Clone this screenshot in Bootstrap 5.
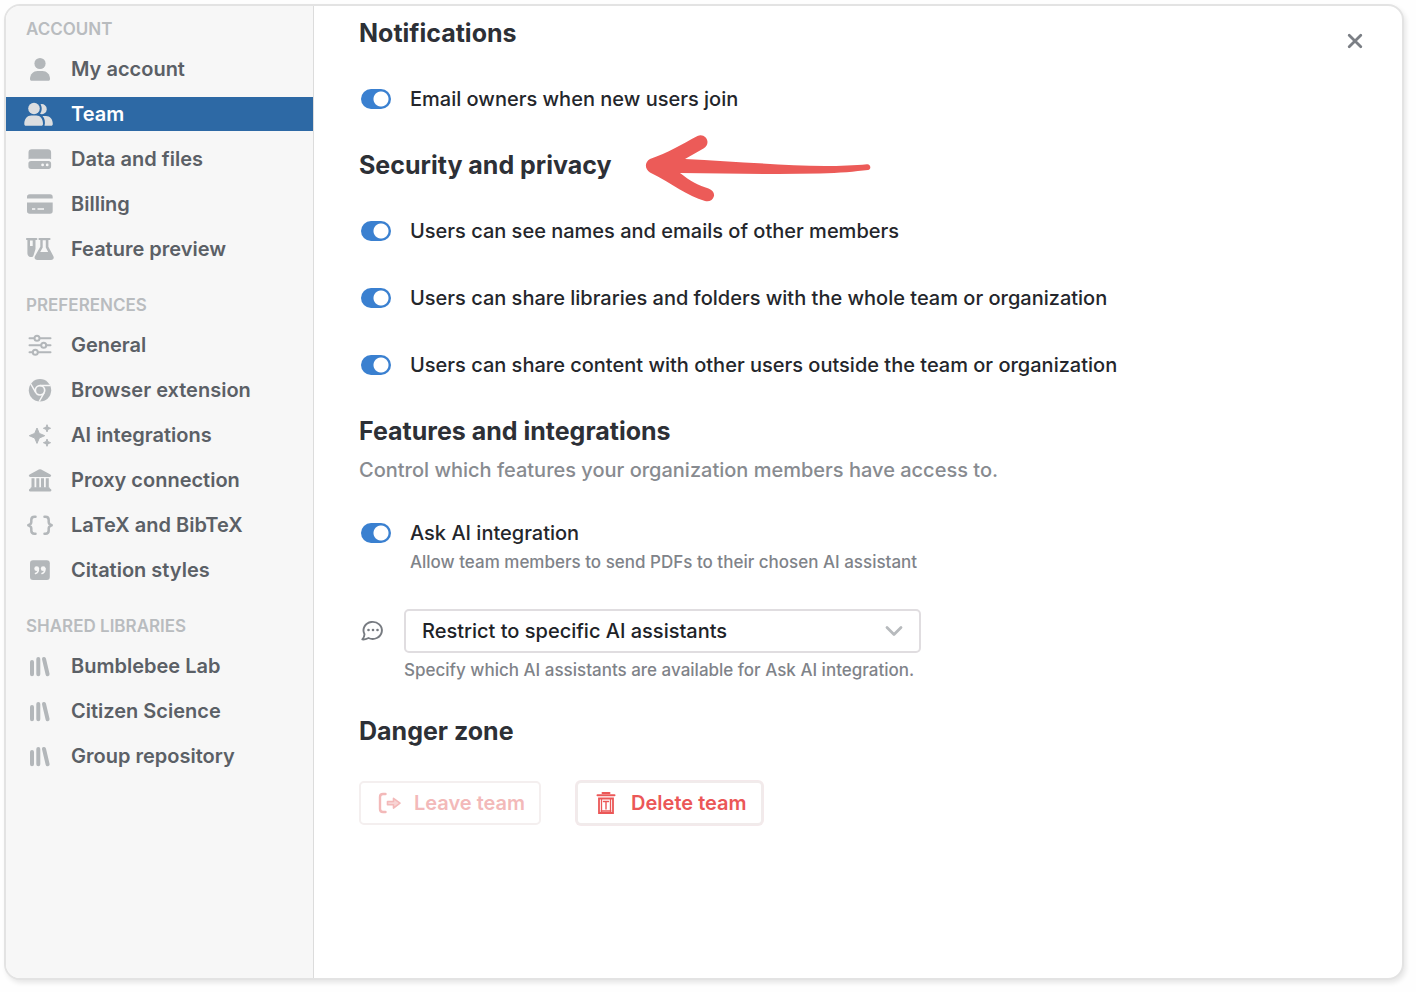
<!DOCTYPE html>
<html lang="en">
<head>
<meta charset="utf-8">
<meta name="viewport" content="width=device-width, initial-scale=1">
<title>Team settings</title>
<link href="https://cdn.jsdelivr.net/npm/bootstrap@5.3.0/dist/css/bootstrap.min.css" rel="stylesheet">
<style>
  body { font-family: Inter, "Liberation Sans", sans-serif; font-size: 20px; line-height: 28px; color: #24262b; background: #fefefe; }
  .settings-window { min-height: calc(100vh - 16px); margin: 4px 12px 12px 4px; border: 2px solid #e3e3e3; border-radius: 16px; background: #fff; box-shadow: 2px 3px 5px #00000018; }
  .side { flex: 0 0 308px; background: #f7f7f7; border-right: 1px solid #dcdcdc; padding-top: 11px; }
  .side-title { font-size: 17px; line-height: 24px; font-weight: 600; color: #b9bcbf; margin: 0 0 11px; padding-left: 20px; }
  .side .nav { gap: 11px; margin-bottom: 27px; }
  .side .nav-link { display: flex; align-items: center; gap: 17px; height: 34px; padding: 0 20px; border-radius: 0; font-weight: 600; color: #5b6066; }
  .side .nav-link svg { width: 28px; height: 28px; flex: none; overflow: visible; color: #b3b7ba; }
  .side .nav-link.active { background: #2d69a5; color: #fff; }
  .side .nav-link.active svg { color: #dcdee0; }
  .panel { padding: 11px 30px 40px 45px; min-width: 0; }
  .panel h2 { font-size: 25px; line-height: 32px; font-weight: 700; color: #2d3036; margin: 0; }
  .panel-top { height: 32px; }
  .arrow { width: 228px; height: 76px; margin: -22px 0 -22px 33px; }
  .toggles { display: grid; gap: 39px; margin: 36px 0; }
  .toggle { display: flex; align-items: center; gap: 19px; min-height: 28px; margin: 0; padding: 0 0 0 2px; font-weight: 500; }
  .toggle .form-check-input { flex: none; width: 30px; height: 20px; margin: 0; border: 0; border-radius: 10px; }
  .toggle .form-check-input:checked { background: radial-gradient(circle at 20px 10px, #fff 7px, #3a80d0 8px); }
  .panel-note { line-height: 24px; font-weight: 500; color: #888b90; margin: 11px 0 37px; }
  .hint { font-size: 17px; line-height: 24px; font-weight: 500; color: #7f8389; margin: 0; }
  .hint-toggle { margin: 3px 0 35px 51px; }
  .picker { display: grid; grid-template-columns: 28px minmax(0, 517px); column-gap: 17px; row-gap: 5px; align-items: center; margin-bottom: 33px; }
  .picker .form-select { height: 44px; padding: 0 44px 0 16px; border: 2px solid #e0dde0; border-radius: 5px; font-size: 20px; font-weight: 500; color: #202227; background-size: 20px 14px; background-position: right 15px center; background-image: url("data:image/svg+xml,%3Csvg xmlns='http://www.w3.org/2000/svg' viewBox='0 0 20 14'%3E%3Cpath d='M3 3.500l7 7 7-7' fill='none' stroke='%23b7babd' stroke-width='2.800' stroke-linecap='round' stroke-linejoin='round'/%3E%3C/svg%3E"); }
  .picker .hint { grid-column: 2; }
  .actions { gap: 35px; margin-top: 34px; }
  .act { display: flex; align-items: center; height: 44px; padding: 0 14px 0 16px; gap: 11px; border: 2px solid #f1ebeb; border-radius: 5px; background: #fff; font-size: 20px; font-weight: 600; color: #eb5757; }
  .act:hover { background: #fff8f8; color: #eb5757; border-color: #f1ebeb; }
  .act:disabled { color: #f3b9b9; border-color: #f4efef; opacity: 1; }
  .act-delete { box-shadow: 0 0 0 1px #f4e9eb; }
  .close-x { border: 0; padding: 8px; background: none; color: #7b7f85; line-height: 0; }
</style>
</head>
<body>
<div class="settings-window d-flex overflow-hidden">
  <nav class="side" aria-label="Settings">
    <h6 class="side-title">ACCOUNT</h6>
    <div class="nav flex-column">
      <a class="nav-link" href="#"><svg viewBox="0 0 28 28" fill="currentColor"><circle cx="14" cy="8.500" r="5.600"/><path d="M4 24c0-5 3.500-8 7.500-8h5c4 0 7.500 3 7.500 8 0 1.200-.6 1.800-1.800 1.800H5.800C4.600 25.800 4 25.200 4 24z"/></svg>My account</a>
      <a class="nav-link active" aria-current="page" href="#"><svg viewBox="0 0 28 28" fill="currentColor"><circle cx="8" cy="8.500" r="5.800"/><path d="M-1.700 24c0-5.300 3-8.500 7-8.500h5c4 0 6.700 3.200 6.700 8.500 0 1.200-.6 1.800-1.800 1.800H.1c-1.200 0-1.800-.6-1.800-1.800z"/><path d="M14.500 4.300a5 5 0 1 1-.5 9.500c2-2.500 2.400-6.500.5-9.500zM16.500 16h3.500c4 0 6.800 3.200 6.800 8 0 1.200-.6 1.800-1.800 1.800h-6.500c1-3.500.4-7.300-2-9.800z"/></svg>Team</a>
      <a class="nav-link" href="#"><svg viewBox="0 0 28 28" fill="currentColor"><path d="M2.500 14.400V7.500c0-2 1.200-3.200 3.200-3.200h16.200c2 0 3.200 1.200 3.200 3.200v6.900c-1-.5-1.500-.6-2.500-.6H5c-1 0-1.500.1-2.500.6z"/><path fill-rule="evenodd" d="M5 16h17.500a2.600 2.600 0 0 1 2.600 2.600v2.700a2.600 2.600 0 0 1-2.600 2.600H5a2.600 2.600 0 0 1-2.600-2.600v-2.700A2.600 2.600 0 0 1 5 16zm11.600 2.500a1.400 1.400 0 1 0 0 2.800 1.400 1.400 0 0 0 0-2.800zm4.600 0a1.400 1.400 0 1 0 0 2.800 1.400 1.400 0 0 0 0-2.800z"/></svg>Data and files</a>
      <a class="nav-link" href="#"><svg viewBox="0 0 28 28" fill="currentColor"><path d="M1 8.500V7a2.700 2.700 0 0 1 2.700-2.700H24A2.700 2.700 0 0 1 26.700 7v1.500z"/><path fill-rule="evenodd" d="M1 12.500h25.700V21a2.700 2.700 0 0 1-2.700 2.700H3.700A2.700 2.700 0 0 1 1 21zm5 5.700v1.500h3.300v-1.500zm5.500 0v1.500H18v-1.500z"/></svg>Billing</a>
      <a class="nav-link" href="#"><svg viewBox="0 0 28 28" fill="currentColor"><path fill-rule="evenodd" d="M1 2.900h9.300a1.100 1.100 0 0 1 0 2.200h-.8V14l-2 6.500c-.5 1.200-1 1.600-2.200 1.600-2.400 0-3.900-1.500-3.900-3.900V5.100H1a1.100 1.100 0 0 1 0-2.200zm3 2.700v5.500h2.700V5.600z"/><path fill-rule="evenodd" d="M13.500 2.900h10a1.100 1.100 0 0 1 0 2.200h-1.100v6.600l5 9.500c1 2-.2 3.900-2.400 3.900H11.300c-2.200 0-3.400-1.900-2.400-3.900l5.400-9.500V5.100h-.8a1.100 1.100 0 0 1 0-2.200zm3.200 2.300v7.200L14.200 17h8l-2.400-4.600V5.200z"/></svg>Feature preview</a>
    </div>
    <h6 class="side-title">PREFERENCES</h6>
    <div class="nav flex-column">
      <a class="nav-link" href="#"><svg viewBox="0 0 28 28" fill="none" stroke="currentColor" stroke-width="2" stroke-linecap="round"><path d="M3.500 7.300h4.700M14 7.300h10.500M3.500 14.300h11.400M20.600 14.300h3.900M3.500 21.300h2.800M12.200 21.300h12.300"/><circle cx="11" cy="7.300" r="2.500"/><circle cx="17.700" cy="14.300" r="2.500"/><circle cx="9.300" cy="21.300" r="2.500"/></svg>General</a>
      <a class="nav-link" href="#"><svg viewBox="0 0 28 28"><circle cx="14" cy="14.300" r="11.200" fill="currentColor"/><circle cx="14" cy="14.300" r="4.700" fill="none" stroke="#f7f7f7" stroke-width="1.700"/><path d="M14 9.400h10.300M9.800 16.700 4.800 8M18.200 16.700 13.200 25.500" fill="none" stroke="#f7f7f7" stroke-width="1.500"/></svg>Browser extension</a>
      <a class="nav-link" href="#"><svg viewBox="0 0 28 28" fill="currentColor" stroke="currentColor" stroke-width="1" stroke-linejoin="round"><path d="M11 7l2.300 5.400 5.400 2.300-5.400 2.300L11 22.400 8.700 17l-5.400-2.300 5.400-2.300z"/><path d="M21 3.700l1 2.600 2.600 1-2.600 1-1 2.600-1-2.600-2.600-1 2.600-1zM21 18.100l1 2.600 2.600 1-2.600 1-1 2.600-1-2.600-2.600-1 2.600-1z"/></svg>AI integrations</a>
      <a class="nav-link" href="#"><svg viewBox="0 0 28 28" fill="currentColor"><path d="M12.800 3.500q1.200-.6 2.400 0l9.200 5c1.300.7.900 2.400-.6 2.400H4.200c-1.500 0-1.900-1.700-.6-2.400zM5.500 12.300h3v9.500h-3zM10.300 12.300h3v9.500h-3zM15 12.300h3v9.500h-3zM19.800 12.300h3v9.500h-3z"/><rect x="3" y="22.800" width="22.300" height="2.700" rx="1.200"/><rect x="4.500" y="21.300" width="19.300" height="3" rx="1"/></svg>Proxy connection</a>
      <a class="nav-link" href="#"><svg viewBox="0 0 28 28" fill="none" stroke="currentColor" stroke-width="2.500" stroke-linecap="round" stroke-linejoin="round"><path d="M9.500 5.800H8.500Q5.300 5.800 5.300 9v2q0 2.300-3 3.300 3 1 3 3.200v2q0 3.200 3.200 3.200h1M18.500 5.800h1q3.200 0 3.200 3.200v2q0 2.300 3 3.300-3 1-3 3.200v2q0 3.200-3.200 3.200h-1"/></svg>LaTeX and BibTeX</a>
      <a class="nav-link" href="#"><svg viewBox="0 0 28 28"><rect x="4" y="4.300" width="19.800" height="19.800" rx="3" fill="currentColor"/><g fill="#f7f7f7"><circle cx="10.700" cy="12.700" r="2.400"/><circle cx="17.200" cy="12.700" r="2.400"/></g><path d="M12.400 12.500q.2 4-2.900 5M18.900 12.500q.2 4-2.900 5" fill="none" stroke="#f7f7f7" stroke-width="1.500" stroke-linecap="round"/></svg>Citation styles</a>
    </div>
    <h6 class="side-title">SHARED LIBRARIES</h6>
    <div class="nav flex-column">
      <a class="nav-link" href="#"><svg viewBox="0 0 28 28" fill="none" stroke="currentColor" stroke-width="4" stroke-linecap="round"><path d="M6 10v12.300M12.300 7v15.300M18 7l3.600 15.300"/></svg>Bumblebee Lab</a>
      <a class="nav-link" href="#"><svg viewBox="0 0 28 28" fill="none" stroke="currentColor" stroke-width="4" stroke-linecap="round"><path d="M6 10v12.300M12.300 7v15.300M18 7l3.600 15.300"/></svg>Citizen Science</a>
      <a class="nav-link" href="#"><svg viewBox="0 0 28 28" fill="none" stroke="currentColor" stroke-width="4" stroke-linecap="round"><path d="M6 10v12.300M12.300 7v15.300M18 7l3.600 15.300"/></svg>Group repository</a>
    </div>
  </nav>

  <main class="panel flex-grow-1">
    <div class="panel-top d-flex justify-content-between align-items-start">
      <h2>Notifications</h2>
      <button class="close-x mt-2" type="button" aria-label="Close"><svg width="18" height="18" viewBox="0 0 18 18" fill="none" stroke="currentColor" stroke-width="2.800" stroke-linecap="round"><path d="M3.200 2.200l11.600 11.600M14.800 2.200 3.200 13.800"/></svg></button>
    </div>
    <div class="toggles">
      <div class="toggle form-switch"><input class="form-check-input" type="checkbox" role="switch" id="mail" checked><label for="mail">Email owners when new users join</label></div>
    </div>

    <div class="d-flex align-items-center">
      <h2>Security and privacy</h2>
      <svg class="arrow" viewBox="645 127 228 76" fill="#ec5b58" aria-hidden="true"><path d="M697.500 136C702 133.500 707.500 137 707.500 142C707.500 145 706 147 703.500 148.500L685 159C730 161 780 165.500 825 166C840 166 855 165.300 867 164.200C871 164 871.500 169.500 868 170C855 171.500 840 173 820 173.500C775 174.500 730 173.500 680 173C690 181 699 185.500 708.500 188.500C712.500 190 714.500 193 714 196C713 200.500 709 202 705 201C687 196 673 184 650 172.500C644.500 169 644.500 162 650 159C668 153 682 144 697.500 136Z"/></svg>
    </div>
    <div class="toggles">
      <div class="toggle form-switch"><input class="form-check-input" type="checkbox" role="switch" id="names" checked><label for="names">Users can see names and emails of other members</label></div>
      <div class="toggle form-switch"><input class="form-check-input" type="checkbox" role="switch" id="libs" checked><label for="libs">Users can share libraries and folders with the whole team or organization</label></div>
      <div class="toggle form-switch"><input class="form-check-input" type="checkbox" role="switch" id="outside" checked><label for="outside">Users can share content with other users outside the team or organization</label></div>
    </div>

    <h2>Features and integrations</h2>
    <p class="panel-note">Control which features your organization members have access to.</p>
    <div class="toggle form-switch"><input class="form-check-input" type="checkbox" role="switch" id="ask" aria-describedby="ask-hint" checked><label for="ask">Ask AI integration</label></div>
    <p class="hint hint-toggle" id="ask-hint">Allow team members to send PDFs to their chosen AI assistant</p>

    <div class="picker">
      <svg width="28" height="28" viewBox="0 0 28 28" fill="none" stroke="#777b81" stroke-width="1.900" stroke-linejoin="round"><path d="M5.500 17.300A9.200 8.500 0 1 1 9.500 21C7.500 22 5.500 22.700 3.300 22.400 4.800 21 5.400 19.300 5.500 17.300z"/><g fill="#777b81" stroke="none"><circle cx="9.500" cy="13" r="1.300"/><circle cx="14" cy="13" r="1.300"/><circle cx="18.500" cy="13" r="1.300"/></g></svg>
      <select class="form-select" aria-label="Available AI assistants"><option>Restrict to specific AI assistants</option><option>Allow all AI assistants</option></select>
      <p class="hint">Specify which AI assistants are available for Ask AI integration.</p>
    </div>

    <h2>Danger zone</h2>
    <div class="actions d-flex flex-wrap">
      <button class="btn act" type="button" disabled><svg width="26" height="26" viewBox="0 0 26 26" fill="none" stroke="currentColor" stroke-width="2.400" stroke-linecap="round" stroke-linejoin="round"><path d="M8.500 4H6Q3 4 3 7v12q0 3 3 3h2.500"/><path d="M10.500 11.500h6V8.300l6.500 4.900-6.500 4.900v-3.300h-6z" stroke-width="1.600" fill="currentColor" fill-opacity=".6"/></svg>Leave team</button>
      <button class="btn act act-delete" type="button"><svg width="26" height="26" viewBox="0 0 26 26" fill="none" stroke="currentColor" stroke-width="2" stroke-linecap="round"><path d="M3.500 5.300h17M8.500 3h7"/><path d="M5 8.500h14v14.500H5z" stroke-width="1.800"/><path d="M7.500 9v13M16.500 9v13M7 21h10" stroke-width="1.300"/><path d="M9.500 11.500h5M12 12v7" stroke-width="1.400"/></svg>Delete team</button>
    </div>
  </main>
</div>
<script src="https://cdn.jsdelivr.net/npm/bootstrap@5.3.0/dist/js/bootstrap.bundle.min.js"></script>
</body>
</html>
